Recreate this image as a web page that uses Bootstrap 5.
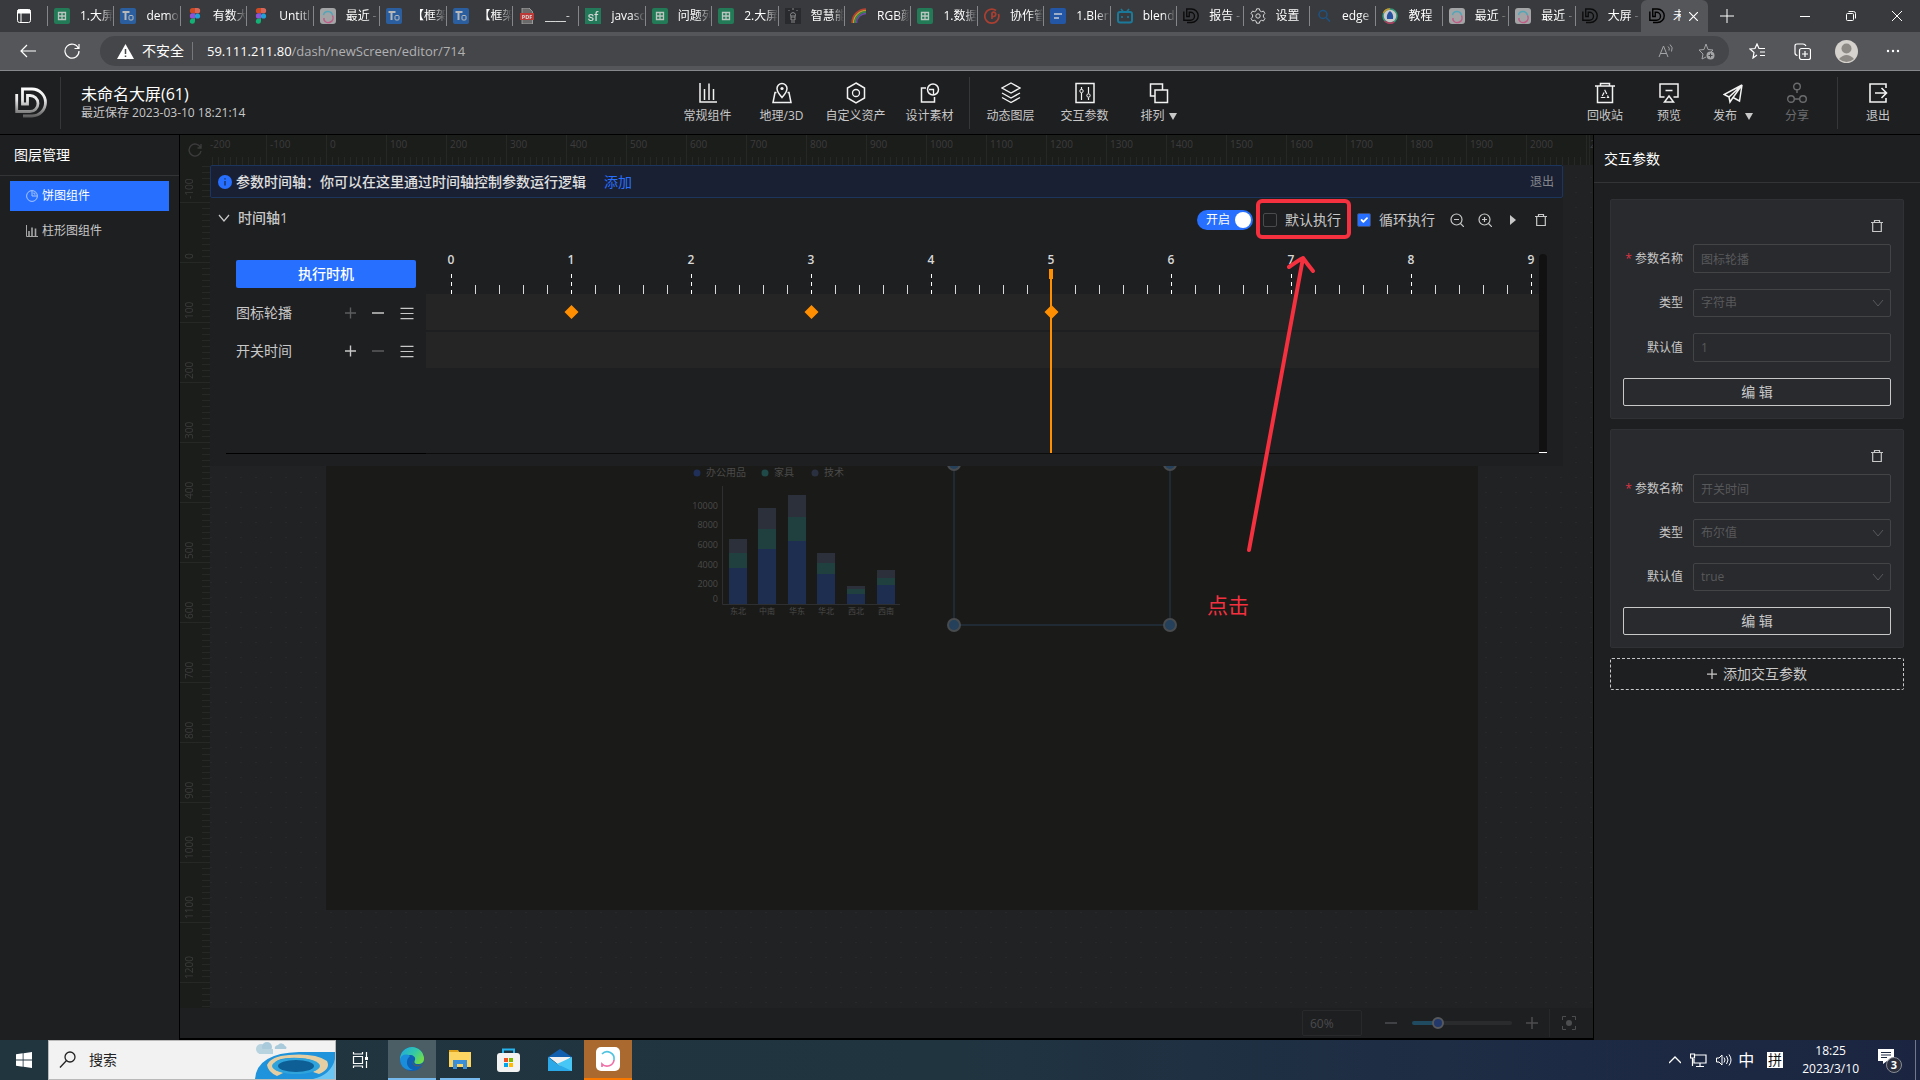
<!DOCTYPE html>
<html lang="zh-CN" data-bs-theme="dark">
<head>
<meta charset="utf-8">
<meta name="viewport" content="width=device-width, initial-scale=1">
<title>未命名大屏(61)</title>
<link href="https://cdn.jsdelivr.net/npm/bootstrap@5.3.0/dist/css/bootstrap.min.css" rel="stylesheet">
<style>
:root{--panel:#1e1f21;--blue:#2770ff;--txt:#c8c8c8;--ui:"Open Sans","Noto Sans CJK SC",sans-serif}
body{font-family:var(--ui);font-size:12px;line-height:18px;background:var(--panel);color:var(--txt);overflow:hidden}
button,input,select{font-family:inherit}
svg{display:block;flex:none}
.plain{background:none;border:0;padding:0;color:inherit;line-height:inherit}
.ln{fill:none;stroke:currentColor}
/* browser chrome */
.tabstrip{height:32px;background:#393a3d;color:#fff}
.tabmenu{width:47px;flex:none}
.tabs{min-width:0}
.btab{flex:1 1 0;min-width:0;border-left:1px solid #85868a;height:20px;padding-left:6px;gap:10px;color:#fff;text-decoration:none}
.btab span{flex:1;min-width:0;overflow:hidden;white-space:nowrap;-webkit-mask-image:linear-gradient(90deg,#000 60%,transparent)}
.btab svg{opacity:.8}
.tab-now{width:67px;flex:none;background:#55565a;border-radius:6px 6px 0 0;padding:0 8px;gap:8px}
.tab-now span{width:8px;overflow:hidden}
.strip-end{width:212px;flex:none}
.winbtn{width:46px;height:32px}
.addr{height:39px;background:#55565a;border-bottom:1px solid #86878b;color:#fff}
.reload{margin:0 20px 0 24px}
.pill{height:30px;border-radius:15px;background:#454649;padding:0 14px 0 17px}
.pill b{font-weight:400;color:#fff}
.pill .unsafe{font-size:14px}
.pill .url{font-size:13px;color:#b0b1b3}
.vr1{width:1px;background:#77787b;height:18px;margin:0 14px 0 8px}
/* application header */
.apphead{height:64px;border-bottom:1px solid #000;background:var(--panel)}
.brandbox{min-width:293px}
.logo{margin:0 13px 0 15px}
.sep{width:1px;height:52px;background:#36373a}
.midsep{margin:0 4px 0 2px}
.ttl{font-size:16px;line-height:20px;color:#fff}
.tool{width:74px;gap:3px;padding-top:2px;color:var(--txt)}
.tool.narrow{width:64px}
.tool svg{color:#f2f2f2}
.tool span svg{color:var(--txt)}
.tool.off,.tool.off svg{color:#6b6c6e}
.headright{padding-right:10px}
/* left list */
.layers{width:180px;border-right:1px solid #000}
.layers h2{font-size:14px;line-height:40px;padding:0 14px;border-bottom:1px solid #333436;color:#fff;font-weight:400}
.layerlist{padding:5px 10px;gap:5px}
.layer{height:30px;padding-left:16px;gap:4px;color:var(--txt);text-decoration:none}
.layer.sel{background:var(--blue);color:#fff}
/* canvas */
.mid{min-width:0}
.rul{background-color:#1b1d1b;color:#3b3c3b;font-size:10px;overflow:hidden}
.corner{width:30px;height:30px;background:#1b1d1b;color:#3b3c3b}
.rul-x{height:30px;background-image:repeating-linear-gradient(90deg,#262826 0 1px,transparent 1px 60px),repeating-linear-gradient(90deg,#262826 0 1px,transparent 1px 6px);background-size:auto,100% 8px;background-position:-4px 0,-4px 100%;background-repeat:repeat-x}
.rul-x span{width:60px;flex:none;line-height:18px}
.rul-y{width:30px;background-image:repeating-linear-gradient(180deg,#262826 0 1px,transparent 1px 60px),repeating-linear-gradient(180deg,#262826 0 1px,transparent 1px 6px);background-size:100% 1200px,8px 1200px;background-position:0 -23px,100% -23px;background-repeat:no-repeat}
.rul-y span{height:60px;flex:none;writing-mode:vertical-rl;transform:rotate(180deg);line-height:18px;padding-top:4px;width:20px}
.rul-y span:first-child{height:38px}
.stagebox{background:#202224;overflow:hidden}
.stagebox text{font-family:var(--ui);fill:#4a4b4a}
.zoombar{height:32px;border-bottom:2px solid #000;color:#4d4e50;padding-right:13px}
.zoombox{width:60px;height:26px;background:transparent;border:1px solid #28292b;border-radius:2px;color:#4a4b4d;font-size:12px;padding:0 7px;margin-right:22px}
.zrange{appearance:none;width:100px;height:4px;border-radius:2px;background:linear-gradient(90deg,#1f4a60 26%,#2a2b2d 26%);margin:0 14px}
.zrange::-webkit-slider-thumb{appearance:none;width:12px;height:12px;border-radius:50%;background:#22386a;border:2px solid #56585c}
.zsep{width:1px;height:28px;background:#27282a;margin:0 8px 0 11px}
/* timeline */
.timeline{left:0;right:30px;top:0;background:var(--panel);height:301px;z-index:2}
.tip{height:33px;background:#1a2034;border:1px solid #1c355c;border-radius:2px;padding:0 8px 0 7px;font-size:14px;color:#e0e0e0}
.tip a{color:#2770ff;margin-left:18px}
.tip button{font-size:12px;color:#85868a}
.tlhead{height:44px;font-size:14px;padding:0 15px 0 8px}
.tlname{gap:8px;padding-bottom:4px}
.sw{width:56px;height:20px;border-radius:10px;background:var(--blue);color:#fff;border:0;font-size:12px;padding:0 2px 0 9px;margin-right:10px}
.knob{width:16px;height:16px;border-radius:50%;background:#fff}
.tick.form-check-input{width:14px;height:14px;margin:0 8px 0 0;border:1px solid #4a4b4d;border-radius:2px;background-color:transparent}
.tick.form-check-input:checked{background-color:var(--blue);border-color:#3a4a70}
.tlicons{gap:14px;margin-left:15px}
.tlnames{width:190px;margin-left:26px;padding-top:6px}
.runbtn{width:180px;height:28px;border-radius:2px;background:var(--blue);color:#fff;border:0;font-size:14px;font-weight:500;margin-bottom:6px}
.tlrow{height:38px;font-size:14px;padding-right:12px}
.dim{color:#5c5d5f}
.tlbody{height:212px}
.tlscroll{width:8px;height:199px;background:#111112;border-radius:4px 4px 0 0;border-bottom:1px solid #fff;margin-right:16px}
.tlbody text{font-family:var(--ui);font-size:12px;font-weight:600;fill:#d8d8d8;text-anchor:middle}
.tlline{left:16px;width:200px;top:288px;height:1px;background:#000}
.note{left:0;top:0;z-index:5;pointer-events:none}
/* parameters */
.params{width:327px;border-left:1px solid #000}
.params h2{font-size:14px;line-height:47px;padding-left:10px;border-bottom:1px solid #333436;color:#fff;font-weight:400}
.plist{padding:16px 16px 0;gap:10px}
.pcard{background:#292a2e;border:1px solid #303135;border-radius:2px;padding:0 12px 12px}
.pcard .trashrow{height:44px;padding:8px 7px 0 0}
.prow{margin-bottom:16px}
.prow label{width:60px;text-align:right;margin-right:10px;white-space:nowrap}
.fld{flex:1;min-width:0;height:29px;background-color:transparent;border:1px solid #434446;border-radius:2px;color:#58595b;font-size:12px;padding:0 7px;opacity:1;appearance:none}
.fld:disabled{color:#58595b;opacity:1}
select.fld{height:28px;background:url("data:image/svg+xml,%3Csvg xmlns='http://www.w3.org/2000/svg' width='12' height='8'%3E%3Cpath d='M1 1l5 6 5-6' fill='none' stroke='%2358595b'/%3E%3C/svg%3E") no-repeat right 6px center}
.editbtn{height:28px;width:100%;background:transparent;border:1px solid #c8c8c8;border-radius:2px;color:var(--txt);font-size:14px;line-height:20px}
.addbtn{height:32px;background:transparent;border:1px dashed #c8c8c8;border-radius:2px;color:var(--txt);font-size:14px;gap:6px}
/* taskbar */
.taskbar{height:40px;background:linear-gradient(90deg,#21353f 0,#203440 50%,#1e2c44 75%,#1b2541 100%);color:#fff}
.searchbox{width:288px;background:#f2f2f2;border:1px solid #b9b9b9;color:#222}
.searchbox input{border:0;background:none;font-size:14px;width:120px;padding:0;outline:0}
.searchbox input::placeholder{color:#222;opacity:1}
.tbtn{width:48px;height:40px}
.tbtn.live{background:#4b5e66;border-bottom:2px solid #76b9ed}
.tbtn.open{border-bottom:2px solid #76b9ed;width:40px;margin:0 4px}
.tbtn.hot{background:#a9692f;border-bottom:2px solid #f97800}
.tray{gap:5px}
.ime{font-size:16px;margin-right:8px}
.clock{margin:0 14px}
</style>
</head>
<body class="vh-100 d-flex flex-column">
<svg width="0" height="0" class="position-absolute" aria-hidden="true">
<defs>
<symbol id="sheet" viewBox="0 0 16 16"><rect width="16" height="16" rx="2" fill="#1d8a5d"/><path d="M4.500 4.500h7v7h-7zM8 4.500v7M4.500 8h7" fill="none" stroke="#dce9e2" stroke-width="1.300"/></symbol>
<symbol id="tower" viewBox="0 0 16 16"><rect width="16" height="16" rx="2" fill="#2768b8"/><path d="M2.500 4h7M5.500 4v8" stroke="#d8d8d8" stroke-width="2" fill="none"/><rect x="9" y="7.500" width="4" height="4.500" rx="1" fill="none" stroke="#d8d8d8"/></symbol>
<symbol id="figma" viewBox="0 0 16 16"><path d="M8 0H5.500a2.600 2.600 0 0 0 0 5.300H8z" fill="#f24e1e"/><path d="M8 0h2.500a2.600 2.600 0 0 1 0 5.300H8z" fill="#ff7262"/><path d="M8 5.300H5.500a2.600 2.600 0 0 0 0 5.300H8z" fill="#a259ff"/><circle cx="10.500" cy="8" r="2.600" fill="#1abcfe"/><path d="M8 10.600H5.500A2.600 2.600 0 1 0 8 13.300z" fill="#0acf83"/></symbol>
<symbol id="loop" viewBox="0 0 16 16"><rect width="16" height="16" rx="3" fill="#bdbfc0"/><path d="M3.500 7A4.600 4.600 0 0 1 12.500 7.500" fill="none" stroke="#5cc0d8" stroke-width="1.500"/><path d="M12.500 7.500A4.500 4.500 0 0 1 4 12v-2" fill="none" stroke="#e0679a" stroke-width="1.500"/></symbol>
<symbol id="pdf" viewBox="0 0 16 16"><path d="M3 0h7l3.500 3.500V16H3z" fill="#777" stroke="#c8c8c8" stroke-width=".8"/><rect x="1" y="5" width="14" height="7" fill="#dc3a36"/><text x="8" y="10.800" font-size="5.500" font-weight="700" fill="#fff" text-anchor="middle" font-family="Open Sans, sans-serif">PDF</text></symbol>
<symbol id="sfi" viewBox="0 0 16 16"><rect width="16" height="16" fill="#1e8a62"/><text x="8" y="12.500" font-size="13" fill="#fff" text-anchor="middle" font-family="Roboto, sans-serif">sf</text></symbol>
<symbol id="bulb" viewBox="0 0 16 16"><rect width="16" height="16" fill="#26272a"/><path d="M6 12V9L5.500 6.500a2.600 2.600 0 0 1 5 0L10 9v3zM6 14h4M8 0v2M3.500 2l1 1M12.500 2l-1 1M7 7v3M9 7v3" fill="none" stroke="#bbb" stroke-width=".8"/></symbol>
<symbol id="rainbow" viewBox="0 0 16 16"><g fill="none" stroke-width="1.500"><path d="M1 15A14 14 0 0 1 15 1" stroke="#d8402f"/><path d="M2.500 15A12.500 12.500 0 0 1 15 2.500" stroke="#e8b32c"/><path d="M4 15A11 11 0 0 1 15 4" stroke="#35a24f"/><path d="M5.500 15A9.500 9.500 0 0 1 15 5.500" stroke="#7a4bc0"/></g></symbol>
<symbol id="redc" viewBox="0 0 16 16"><path d="M12 2.500A7 7 0 1 0 14.500 6M8 11V5c2-2 5 0 3 3l-3 1" fill="none" stroke="#c7402f" stroke-width="1.700"/></symbol>
<symbol id="bluedoc" viewBox="0 0 16 16"><rect width="16" height="16" rx="2" fill="#1e5fc0"/><path d="M4 6h8M4 10h5" stroke="#e8eefa" stroke-width="1.600"/></symbol>
<symbol id="bili" viewBox="0 0 16 16"><rect x="1" y="4" width="14" height="10.500" rx="2" fill="none" stroke="#1489b0" stroke-width="2"/><path d="M4 1l2.500 3M12 1L9.500 4M5 8v2M11 8v2" stroke="#1489b0" stroke-width="1.600"/></symbol>
<symbol id="dd" viewBox="0 0 32 32"><path d="M1.700 7v17.500H15a7.800 7.800 0 0 0 0-16h-2.500V17M7.500 18V2h9.500a13 13 0 0 1 0 27H8M6.200 17h7.700" fill="none" stroke="currentColor" stroke-width="2.800"/></symbol>
<symbol id="gear" viewBox="0 0 16 16"><circle cx="8" cy="8" r="2.200" class="ln"/><path class="ln" stroke-linejoin="round" d="M6.600.8h2.800l.5 2 1.600.9 2-.6 1.400 2.400-1.500 1.500v2l1.500 1.500-1.400 2.400-2-.6-1.600.9-.5 2H6.600l-.5-2-1.600-.9-2 .6-1.400-2.400L2.600 9V7L1.100 5.500l1.400-2.400 2 .6 1.600-.9z"/></symbol>
<symbol id="bing" viewBox="0 0 16 16"><circle cx="7" cy="6.500" r="4" fill="none" stroke="#175a94" stroke-width="1.500"/><path d="M10 9.500l4 4" stroke="#175a94" stroke-width="1.500"/></symbol>
<symbol id="drop" viewBox="0 0 16 16"><circle cx="8" cy="8" r="7" fill="#eee" stroke="#35b08a" stroke-width="1.500"/><path d="M1.500 5A7 7 0 0 1 8 1" fill="none" stroke="#e7b22d" stroke-width="1.600"/><path d="M3 13a7 7 0 0 0 9 1" fill="none" stroke="#d33b66" stroke-width="1.800"/><path d="M8 3c3 2 3.500 5 3 8H5c-.5-3 0-6 3-8z" fill="#2257b8"/></symbol>
<symbol id="bin" viewBox="0 0 14 14"><path class="ln" stroke-width="1.200" d="M1 3.500h12M4.500 3.500v-2h5v2M2.700 3.500v9h8.600v-9"/></symbol>
<symbol id="plus" viewBox="0 0 12 12"><path class="ln" stroke-width="1.500" d="M6 0v12M0 6h12"/></symbol>
<symbol id="minus" viewBox="0 0 12 12"><path class="ln" stroke-width="1.500" d="M0 6h12"/></symbol>
<symbol id="bars" viewBox="0 0 14 14"><path class="ln" stroke-width="1.200" d="M0 1.500h14M0 7h14M0 12.500h14"/></symbol>
<symbol id="tri" viewBox="0 0 8 7"><path d="M0 0h8L4 7z" fill="currentColor"/></symbol>
</defs>
</svg>

<div class="tabstrip d-flex align-items-center">
<button class="plain tabmenu d-flex justify-content-center" aria-label="标签页菜单"><svg width="14" height="14" viewBox="0 0 14 14"><rect class="ln" x=".5" y=".5" width="13" height="13" rx="2"/><path d="M1 1h12v3H1zM4 4v9" stroke="#fff" fill="#fff"/></svg></button>
<nav class="tabs d-flex align-items-center flex-fill">
<a href="#" class="btab d-flex align-items-center"><svg width="16" height="16"><use href="#sheet"/></svg><span>1.大屏</span></a>
<a href="#" class="btab d-flex align-items-center"><svg width="16" height="16"><use href="#tower"/></svg><span>demo</span></a>
<a href="#" class="btab d-flex align-items-center"><svg width="16" height="16"><use href="#figma"/></svg><span>有数大</span></a>
<a href="#" class="btab d-flex align-items-center"><svg width="16" height="16"><use href="#figma"/></svg><span>Untitl</span></a>
<a href="#" class="btab d-flex align-items-center"><svg width="16" height="16"><use href="#loop"/></svg><span>最近 -</span></a>
<a href="#" class="btab d-flex align-items-center"><svg width="16" height="16"><use href="#tower"/></svg><span>【框架</span></a>
<a href="#" class="btab d-flex align-items-center"><svg width="16" height="16"><use href="#tower"/></svg><span>【框架</span></a>
<a href="#" class="btab d-flex align-items-center"><svg width="16" height="16"><use href="#pdf"/></svg><span>____-</span></a>
<a href="#" class="btab d-flex align-items-center"><svg width="16" height="16"><use href="#sfi"/></svg><span>javasc</span></a>
<a href="#" class="btab d-flex align-items-center"><svg width="16" height="16"><use href="#sheet"/></svg><span>问题列</span></a>
<a href="#" class="btab d-flex align-items-center"><svg width="16" height="16"><use href="#sheet"/></svg><span>2.大屏</span></a>
<a href="#" class="btab d-flex align-items-center"><svg width="16" height="16"><use href="#bulb"/></svg><span>智慧能</span></a>
<a href="#" class="btab d-flex align-items-center"><svg width="16" height="16"><use href="#rainbow"/></svg><span>RGB颜</span></a>
<a href="#" class="btab d-flex align-items-center"><svg width="16" height="16"><use href="#sheet"/></svg><span>1.数据</span></a>
<a href="#" class="btab d-flex align-items-center"><svg width="16" height="16"><use href="#redc"/></svg><span>协作管</span></a>
<a href="#" class="btab d-flex align-items-center"><svg width="16" height="16"><use href="#bluedoc"/></svg><span>1.Blen</span></a>
<a href="#" class="btab d-flex align-items-center"><svg width="16" height="16"><use href="#bili"/></svg><span>blend</span></a>
<a href="#" class="btab d-flex align-items-center"><svg width="16" height="16" class="text-black"><use href="#dd"/></svg><span>报告 -</span></a>
<a href="#" class="btab d-flex align-items-center"><svg width="16" height="16"><use href="#gear"/></svg><span>设置</span></a>
<a href="#" class="btab d-flex align-items-center"><svg width="16" height="16"><use href="#bing"/></svg><span>edge</span></a>
<a href="#" class="btab d-flex align-items-center"><svg width="16" height="16"><use href="#drop"/></svg><span>教程</span></a>
<a href="#" class="btab d-flex align-items-center"><svg width="16" height="16"><use href="#loop"/></svg><span>最近 -</span></a>
<a href="#" class="btab d-flex align-items-center"><svg width="16" height="16"><use href="#loop"/></svg><span>最近 -</span></a>
<a href="#" class="btab d-flex align-items-center"><svg width="16" height="16" class="text-black"><use href="#dd"/></svg><span>大屏 -</span></a>
</nav>
<div class="tab-now d-flex align-items-center h-100"><svg width="16" height="16" class="text-black"><use href="#dd"/></svg><span>未</span><button class="plain" aria-label="关闭标签页"><svg width="9" height="9" viewBox="0 0 9 9"><path class="ln" stroke-width="1.200" d="M0 0l9 9M9 0L0 9"/></svg></button></div>
<div class="strip-end d-flex align-items-center">
<button class="plain px-2 ms-1 me-auto" aria-label="新建标签页"><svg width="14" height="14" viewBox="0 0 14 14"><path class="ln" d="M7 0v14M0 7h14"/></svg></button>
<button class="plain winbtn d-flex align-items-center justify-content-center" aria-label="最小化"><svg width="10" height="10" viewBox="0 0 10 10"><path class="ln" d="M0 5.500h10"/></svg></button>
<button class="plain winbtn d-flex align-items-center justify-content-center" aria-label="还原"><svg width="10" height="10" viewBox="0 0 10 10"><rect class="ln" x=".5" y="2.500" width="7" height="7" rx="1"/><path class="ln" d="M2.500.5h5a2 2 0 0 1 2 2v5"/></svg></button>
<button class="plain winbtn d-flex align-items-center justify-content-center" aria-label="关闭"><svg width="10" height="10" viewBox="0 0 10 10"><path class="ln" d="M0 0l10 10M10 0L0 10"/></svg></button>
</div>
</div>

<div class="addr d-flex align-items-center">
<button class="plain ms-3 px-1" aria-label="后退"><svg width="16" height="14" viewBox="0 0 16 14"><path class="ln" stroke-width="1.200" d="M16 7H1M7 1L1 7l6 6"/></svg></button>
<button class="plain reload" aria-label="刷新"><svg width="16" height="16" viewBox="0 0 16 16"><path class="ln" stroke-width="1.200" d="M14.500 5.500A7 7 0 1 0 15 8M15 1v4.500h-4.500"/></svg></button>
<div class="pill d-flex align-items-center flex-fill">
<svg width="17" height="15" viewBox="0 0 17 15"><path d="M8.500 0L17 15H0z" fill="#fff"/><path d="M8.500 5v5M8.500 11.500v1.500" stroke="#454649" stroke-width="1.500"/></svg>
<span class="ms-2 unsafe">不安全</span><span class="vr1"></span>
<span class="url"><b>59.111.211.80</b>/dash/newScreen/editor/714</span>
<svg class="ms-auto" width="16" height="16" viewBox="0 0 16 16" color="#a3a4a6"><path class="ln" d="M1 14L5.500 3 10 14M2.500 10.500h6M10 3.500q2 1.500 1 4M12 1.500q3.500 3 1.500 7"/></svg>
<svg class="ms-4" width="17" height="17" viewBox="0 0 17 17" color="#a3a4a6"><path class="ln" d="M8 14l-4 2 1-5-4-4 5-.5L8 1l2 5.500 5 .5-2 2"/><circle cx="12.500" cy="12.500" r="4" fill="#a3a4a6"/><path d="M12.500 10.500v4M10.500 12.500h4" stroke="#454649"/></svg>
</div>
<div class="d-flex align-items-center ps-3 ms-1 pe-3 me-1">
<svg class="me-4" width="17" height="16" viewBox="0 0 17 16"><path class="ln" stroke-width="1.200" d="M8 12l-4 3 1-5.500-4-3.500 5-.5L8 1l2 4.500h6M11 9h5M11 12.500h5"/></svg>
<svg class="ms-1 me-4" width="17" height="17" viewBox="0 0 17 17"><rect class="ln" stroke-width="1.200" x="5.500" y="5.500" width="11" height="11" rx="2"/><path class="ln" stroke-width="1.200" d="M11 8v6M8 11h6M3.500 12.500Q1 12 1 10V3q0-2 2-2h6q2 0 3 2"/></svg>
<svg class="me-4" width="23" height="23" viewBox="0 0 23 23"><circle cx="11.500" cy="11.500" r="11.500" fill="#d5d2cd"/><circle cx="11.500" cy="8.500" r="5" fill="#8d8984"/><path d="M4 19q7.500-8 15 0-7.500 6-15 0" fill="#8d8984"/></svg>
<svg class="ms-1" width="14" height="4" viewBox="0 0 14 4" fill="#fff"><circle cx="2" cy="2" r="1.200"/><circle cx="7" cy="2" r="1.200"/><circle cx="12" cy="2" r="1.200"/></svg>
</div>
</div>

<header class="apphead d-flex align-items-center">
<div class="brandbox d-flex align-items-center">
<svg class="logo" width="32" height="32" viewBox="0 0 32 32"><defs><linearGradient id="lg" x2="0" y2="32" gradientUnits="userSpaceOnUse"><stop stop-color="#fff"/><stop offset=".4" stop-color="#e8e8e8"/><stop offset="1" stop-color="#4a4a4a"/></linearGradient></defs><path d="M1.700 7v17.500H15a7.800 7.800 0 0 0 0-16h-2.500V17M7.500 18V2h9.500a13 13 0 0 1 0 27H8M6.200 17h7.700" fill="none" stroke="url(#lg)" stroke-width="2.800"/></svg>
<span class="sep"></span>
<div class="ms-3 ps-1"><div class="ttl">未命名大屏(61)</div><div class="text-nowrap">最近保存 2023-03-10 18:21:14</div></div>
</div>
<nav class="d-flex align-items-center mx-auto">
<button class="plain tool d-flex flex-column align-items-center"><svg width="20" height="22" viewBox="0 0 20 22"><path class="ln" stroke-width="1.500" d="M2 1v19h17M6.500 18V7M11 18V1.500M15.500 18V7"/></svg>常规组件</button>
<button class="plain tool d-flex flex-column align-items-center"><svg width="20" height="22" viewBox="0 0 20 22"><path class="ln" stroke-width="1.500" d="M4.500 10.500H3L1 20.500h18l-2-10h-1.500M10 15.500C6 11 5 9 5 6.500a5 5 0 0 1 10 0c0 2.500-1 4.500-5 9z"/><circle cx="10" cy="6.500" r="1.600" fill="currentColor"/></svg>地理/3D</button>
<button class="plain tool d-flex flex-column align-items-center"><svg width="20" height="22" viewBox="0 0 20 22"><path class="ln" stroke-width="1.500" d="M10 1l8.500 5v10L10 21l-8.500-5V6z"/><circle class="ln" stroke-width="1.300" cx="10" cy="11" r="3.500"/></svg>自定义资产</button>
<button class="plain tool d-flex flex-column align-items-center"><svg width="20" height="22" viewBox="0 0 20 22"><path class="ln" stroke-width="1.500" d="M6 6H1.500v14h13v-5"/><circle class="ln" stroke-width="1.500" cx="13" cy="7.500" r="5.500"/><path class="ln" stroke-width="1.300" d="M9 7.500h4.500V13"/></svg>设计素材</button>
<span class="sep midsep"></span>
<button class="plain tool d-flex flex-column align-items-center"><svg width="20" height="22" viewBox="0 0 20 22"><path class="ln" stroke-width="1.400" d="M10 1l9 5-9 5-9-5zM1 11l9 5 9-5M1 15.500l9 5 9-5"/></svg>动态图层</button>
<button class="plain tool d-flex flex-column align-items-center"><svg width="20" height="22" viewBox="0 0 20 22"><path class="ln" stroke-width="1.500" d="M1 1.500h18v19H1z"/><path class="ln" stroke-width="1.200" d="M6.500 5v2.500M6.500 11v7M13.500 5v6.500M13.500 15.500V18"/><circle class="ln" cx="6.500" cy="9" r="1.700"/><circle class="ln" cx="13.500" cy="13.500" r="1.700"/></svg>交互参数</button>
<button class="plain tool d-flex flex-column align-items-center"><svg width="20" height="22" viewBox="0 0 20 22"><path class="ln" stroke-width="1.500" d="M6 8h12.500v12.500H6zM13.500 8V2H1.500v12H6"/></svg><span class="d-flex align-items-center gap-1">排列<svg width="8" height="7"><use href="#tri"/></svg></span></button>
</nav>
<nav class="headright d-flex align-items-center">
<button class="plain tool narrow d-flex flex-column align-items-center"><svg width="20" height="22" viewBox="0 0 20 22"><path class="ln" stroke-width="1.500" d="M0 4h20M5.500 4V1.500h9V4M2.500 4v16.500h15V4"/><path class="ln" stroke-width="1.200" stroke-dasharray="4 1.500" d="M10 8.500l3.500 7h-7z"/></svg>回收站</button>
<button class="plain tool narrow d-flex flex-column align-items-center"><svg width="20" height="22" viewBox="0 0 20 22"><path class="ln" stroke-width="1.500" d="M5.500 15H1V2h18v13h-4.500M6.500 8.500h7M10 14l4.500 6h-9z"/></svg>预览</button>
<button class="plain tool narrow d-flex flex-column align-items-center"><svg width="20" height="22" viewBox="0 0 20 22"><path class="ln" stroke-width="1.500" d="M19 3L1 12.500l5 2.500zM19 3l-2.500 16-6.500-3.500zM6 15l1 5 3-4.500"/></svg><span class="d-flex align-items-center gap-2">发布<svg width="8" height="7"><use href="#tri"/></svg></span></button>
<button class="plain tool off narrow d-flex flex-column align-items-center"><svg width="20" height="22" viewBox="0 0 20 22"><circle class="ln" stroke-width="1.400" cx="10" cy="4.500" r="3.300"/><circle class="ln" stroke-width="1.400" cx="4" cy="17" r="3.300"/><circle class="ln" stroke-width="1.400" cx="16" cy="17" r="3.300"/><path class="ln" stroke-width="1.400" d="M10 8v3M7.500 17h5"/></svg>分享</button>
<span class="sep mx-2"></span>
<button class="plain tool narrow d-flex flex-column align-items-center"><svg width="20" height="22" viewBox="0 0 20 22"><path class="ln" stroke-width="1.600" d="M18 6V2H2v18h16v-4M7 11h11M13.500 6l5 5-5 5"/></svg>退出</button>
</nav>
</header>

<main class="d-flex flex-fill position-relative" style="min-height:0">
<aside class="layers flex-shrink-0">
<h2 class="m-0">图层管理</h2>
<div class="layerlist d-flex flex-column">
<a href="#" class="layer sel d-flex align-items-center"><svg width="12" height="12" viewBox="0 0 12 12" opacity=".6"><circle class="ln" cx="6" cy="6" r="5.400"/><path class="ln" d="M6 1v5h5M8 2.500v1.500h1.500"/></svg>饼图组件</a>
<a href="#" class="layer d-flex align-items-center"><svg width="12" height="12" viewBox="0 0 12 12" opacity=".8"><path class="ln" stroke-width="1" d="M.5 0v11.500H12"/><path class="ln" stroke-width="1.600" d="M3 11V6M6 11V2.500M9.500 11V3.500"/></svg>柱形图组件</a>
</div>
</aside>

<section class="mid flex-fill d-flex flex-column">
<div class="d-flex"><button class="plain corner d-flex align-items-center justify-content-center flex-shrink-0" aria-label="复位"><svg width="14" height="14" viewBox="0 0 14 14"><path class="ln" stroke-width="1.400" d="M12.500 4.500A6 6 0 1 0 13 8M13 1v4H9.500"/></svg></button><div class="rul rul-x d-flex flex-fill" id="rulerX"></div></div>
<div class="d-flex flex-fill" style="min-height:0">
<div class="rul rul-y d-flex flex-column flex-shrink-0" id="rulerY"></div>
<div class="stagebox position-relative flex-fill">
<svg class="position-absolute" width="100%" height="100%">
<defs><pattern id="dots" x="15" y="12" width="15" height="15" patternUnits="userSpaceOnUse"><rect width="2" height="1" fill="#27292b"/></pattern></defs>
<rect width="100%" height="100%" fill="url(#dots)"/>
<rect x="116" y="97" width="1152" height="648" fill="#1a1a18"/>
<g font-size="10"><circle cx="487" cy="308" r="3.500" fill="#1f2f58"/><text x="496" y="311">办公用品</text><circle cx="555" cy="308" r="3.500" fill="#1f4a47"/><text x="564" y="311">家具</text><circle cx="605" cy="308" r="3.500" fill="#2b3040"/><text x="614" y="311">技术</text></g>
<path d="M512.500 321v118.500H690" fill="none" stroke="#2e2f30"/>
<g font-size="9" text-anchor="end"><text x="508" y="344">10000</text><text x="508" y="363">8000</text><text x="508" y="383">6000</text><text x="508" y="403">4000</text><text x="508" y="422">2000</text><text x="508" y="437">0</text></g>
<g fill="#2b303b"><path d="M519 374h18v14h-18zM548 343h18v21h-18zM578 330h18v22h-18zM607 388h18v10h-18zM637 421h18v3h-18zM667 405h18v8h-18z"/></g>
<g fill="#1f403e"><path d="M519 388h18v15h-18zM548 364h18v20h-18zM578 352h18v24h-18zM607 398h18v11h-18zM637 424h18v5h-18zM667 413h18v7h-18z"/></g>
<g fill="#1e2e50"><path d="M519 403h18v36h-18zM548 384h18v55h-18zM578 376h18v63h-18zM607 409h18v30h-18zM637 429h18v10h-18zM667 420h18v19h-18z"/></g>
<g font-size="8" text-anchor="middle"><text x="528" y="449">东北</text><text x="557" y="449">中南</text><text x="587" y="449">华东</text><text x="616" y="449">华北</text><text x="646" y="449">西北</text><text x="676" y="449">西南</text></g>
<g fill="none" stroke="#22303f" stroke-width="1.500"><path d="M744 299v161h216V299"/></g>
<g fill="#24405a" stroke="#484b4e" stroke-width="2"><circle cx="744" cy="299" r="6"/><circle cx="960" cy="299" r="6"/><circle cx="744" cy="460" r="6"/><circle cx="960" cy="460" r="6"/></g>
</svg>

<div class="timeline position-absolute d-flex flex-column">
<div class="tip d-flex align-items-center"><svg width="14" height="14" viewBox="0 0 14 14"><circle cx="7" cy="7" r="7" fill="#2770ff"/><path d="M7 6v4.500M7 3.200v1.300" stroke="#16305f" stroke-width="1.400"/></svg><span class="ms-1 fw-medium">参数时间轴：你可以在这里通过时间轴控制参数运行逻辑</span><a href="#" class="text-decoration-none">添加</a><button class="plain ms-auto">退出</button></div>
<div class="tlhead d-flex align-items-center"><div class="tlname d-flex align-items-center me-auto"><svg width="12" height="8" viewBox="0 0 12 8"><path class="ln" stroke-width="1.200" d="M1 1l5 6 5-6"/></svg><span class="fw-medium">时间轴1</span></div>
<button class="sw d-flex align-items-center justify-content-between" role="switch" aria-checked="true">开启<span class="knob"></span></button>
<input class="tick form-check-input" type="checkbox" id="autorun"><label for="autorun" class="me-3">默认执行</label>
<input class="tick form-check-input" type="checkbox" id="looprun" checked><label for="looprun">循环执行</label>
<div class="tlicons d-flex">
<button class="plain" aria-label="缩小"><svg width="14" height="14" viewBox="0 0 14 14"><circle class="ln" stroke-width="1.200" cx="6.500" cy="6.500" r="5.500"/><path class="ln" stroke-width="1.200" d="M4 6.500h5M10.500 10.500L14 14"/></svg></button>
<button class="plain" aria-label="放大"><svg width="14" height="14" viewBox="0 0 14 14"><circle class="ln" stroke-width="1.200" cx="6.500" cy="6.500" r="5.500"/><path class="ln" stroke-width="1.200" d="M4 6.500h5M6.500 4v5M10.500 10.500L14 14"/></svg></button>
<button class="plain" aria-label="播放"><svg width="14" height="14" viewBox="0 0 14 14"><path d="M4 2l6 5-6 5z" fill="currentColor"/></svg></button>
<button class="plain" aria-label="删除时间轴"><svg width="14" height="14"><use href="#bin"/></svg></button>
</div></div>
<div class="tlbody d-flex mt-2 pt-1">
<div class="tlnames flex-shrink-0">
<button class="runbtn d-block">执行时机</button>
<div class="tlrow d-flex align-items-center"><span class="me-auto">图标轮播</span><button class="plain dim" aria-label="添加"><svg width="11" height="12"><use href="#plus"/></svg></button><button class="plain mx-3" aria-label="移除"><svg width="12" height="12"><use href="#minus"/></svg></button><button class="plain" aria-label="菜单"><svg width="14" height="13"><use href="#bars"/></svg></button></div>
<div class="tlrow d-flex align-items-center"><span class="me-auto">开关时间</span><button class="plain" aria-label="添加"><svg width="11" height="12"><use href="#plus"/></svg></button><button class="plain dim mx-3" aria-label="移除"><svg width="12" height="12"><use href="#minus"/></svg></button><button class="plain" aria-label="菜单"><svg width="14" height="13"><use href="#bars"/></svg></button></div>
</div>
<svg class="flex-fill" width="100" height="200">
<defs>
<pattern id="minor" x="25" width="24" height="200" patternUnits="userSpaceOnUse"><rect width="1" height="200" fill="#d8d8d8"/></pattern>
<pattern id="major" x="25" width="120" height="8" patternUnits="userSpaceOnUse"><rect width="1" height="4" fill="#fff"/></pattern>
<pattern id="blank" x="25" width="120" height="200" patternUnits="userSpaceOnUse"><rect width="1" height="200" fill="#1e1f21"/></pattern>
</defs>
<rect x="25" y="31" width="100%" height="9" fill="url(#minor)"/><rect x="25" y="20" width="100%" height="20" fill="url(#blank)"/><g transform="translate(0 20)"><rect x="25" width="100%" height="20" fill="url(#major)"/></g>
<rect y="40" width="100%" height="36" fill="#252525"/><rect y="78" width="100%" height="36" fill="#252525"/>
<rect y="199" width="100%" height="1" fill="#0c0c0d"/>
<text x="25" y="10">0</text><text x="145" y="10">1</text><text x="265" y="10">2</text><text x="385" y="10">3</text><text x="505" y="10">4</text><text x="625" y="10">5</text><text x="745" y="10">6</text><text x="865" y="10">7</text><text x="985" y="10">8</text><text x="1105" y="10">9</text>
<g fill="#ff8f00"><path d="M145.500 51l7 7-7 7-7-7zM385.500 51l7 7-7 7-7-7zM625.500 51l7 7-7 7-7-7z"/><path d="M623 15h4v10h-1v174h-2V25h-1z"/></g>
</svg>
<div class="tlscroll flex-shrink-0"></div>
</div>
<div class="tlline position-absolute"></div>
</div>
</div>
</div>
<div class="zoombar d-flex align-items-center justify-content-end">
<label class="visually-hidden" for="zoomval">缩放</label><input id="zoomval" class="zoombox" value="60%">
<button class="plain" aria-label="缩小画布"><svg width="14" height="12" viewBox="0 0 14 12"><path class="ln" stroke-width="1.500" d="M1 6h12"/></svg></button>
<input type="range" class="zrange" min="0" max="100" value="23" aria-label="缩放比例">
<button class="plain" aria-label="放大画布"><svg width="12" height="12"><use href="#plus"/></svg></button>
<span class="zsep"></span>
<button class="plain px-1" aria-label="适应画布"><svg width="14" height="14" viewBox="0 0 14 14"><path class="ln" d="M.5 4V.5H4M10 .5h3.500V4M13.500 10v3.500H10M4 13.500H.5V10"/><circle cx="7" cy="7" r="3" fill="currentColor"/></svg></button>
</div>
</section>

<aside class="params flex-shrink-0">
<h2 class="m-0">交互参数</h2>
<div class="plist d-flex flex-column">
<form class="pcard">
<div class="trashrow d-flex align-items-center justify-content-end"><button type="button" class="plain" aria-label="删除参数"><svg width="14" height="14"><use href="#bin"/></svg></button></div>
<div class="prow d-flex align-items-center"><label for="n1"><span class="text-danger">*</span> 参数名称</label><input class="fld" id="n1" value="图标轮播" disabled></div>
<div class="prow d-flex align-items-center"><label for="t1">类型</label><select class="fld" id="t1" disabled><option>字符串</option></select></div>
<div class="prow d-flex align-items-center"><label for="v1">默认值</label><input class="fld" id="v1" value="1" disabled></div>
<button type="button" class="editbtn d-block">编 辑</button>
</form>
<form class="pcard">
<div class="trashrow d-flex align-items-center justify-content-end"><button type="button" class="plain" aria-label="删除参数"><svg width="14" height="14"><use href="#bin"/></svg></button></div>
<div class="prow d-flex align-items-center"><label for="n2"><span class="text-danger">*</span> 参数名称</label><input class="fld" id="n2" value="开关时间" disabled></div>
<div class="prow d-flex align-items-center"><label for="t2">类型</label><select class="fld" id="t2" disabled><option>布尔值</option></select></div>
<div class="prow d-flex align-items-center"><label for="v2">默认值</label><select class="fld" id="v2" disabled><option>true</option></select></div>
<button type="button" class="editbtn d-block">编 辑</button>
</form>
<button class="addbtn d-flex align-items-center justify-content-center"><svg width="10" height="12"><use href="#plus"/></svg>添加交互参数</button>
</div>
</aside>

<svg class="note position-absolute" width="1920" height="600" viewBox="0 0 1920 600" fill="none" stroke="#f5303f">
<rect x="1258" y="66" width="91" height="36" rx="4" stroke-width="4"/>
<path d="M1249 415L1303 123M1289 132q10-7 14-9 5 7 10 13" stroke-width="4" stroke-linecap="round" stroke-linejoin="round"/>
<text x="1207" y="478" font-size="21" font-weight="400" font-family="Noto Sans CJK SC, sans-serif" fill="#f5303f" stroke="none">点击</text>
</svg>
</main>

<footer class="taskbar d-flex align-items-stretch flex-shrink-0">
<button class="plain tbtn d-flex align-items-center justify-content-center" aria-label="开始"><svg width="16" height="16" viewBox="0 0 16 16" fill="#fff"><path d="M0 2.200L6.700 1.300v6.300H0zM7.500 1.200L16 0v7.600H7.500zM0 8.400h6.700v6.300L0 13.800zM7.500 8.400H16V16l-8.500-1.200z"/></svg></button>
<div class="searchbox d-flex align-items-center"><svg class="ms-2 me-1" width="20" height="20" viewBox="0 0 20 20"><circle cx="13" cy="7" r="5" fill="none" stroke="#222" stroke-width="1.300"/><path d="M9.500 10.500L3 17.500" stroke="#222" stroke-width="1.300"/></svg><input class="ms-2" type="text" placeholder="搜索" aria-label="搜索">
<svg class="ms-auto align-self-end" width="80" height="38" viewBox="0 0 80 38"><path d="M0 38Q2 12 44 11H80v27z" fill="#1f93dc"/><path d="M58 38q18-4 22-20v20z" fill="#6cc6f4"/><path d="M12 24q4-9 22-10 26-2 38 6 4 8-8 13l-6-2q8-6 2-10-10-5-26-4-14 1-14 6l8 9-6 3q-9-4-10-11z" fill="#e5cfa2"/><ellipse cx="41" cy="25" rx="24" ry="8" fill="#2fa3dc"/><ellipse cx="41" cy="25" rx="18" ry="6" fill="#0d5f96"/><circle cx="6" cy="8" r="5" fill="#b7d3e0"/><circle cx="12" cy="6" r="5" fill="#a9cadb"/><path d="M2 8h16v5H4z" fill="#b7d3e0"/><path d="M20 8a4 3 0 0 1 3-4 4 4 0 0 1 7 1 2 2 0 0 1 1 3z" fill="#a9cadb"/></svg></div>
<button class="plain tbtn d-flex align-items-center justify-content-center" aria-label="任务视图"><svg width="17" height="16" viewBox="0 0 17 16"><path class="ln" stroke-width="1.200" d="M1.500 4.500h9v7h-9zM1.500 0v2h9V0M1.500 16v-2h9v2M14.500 0v5M14.500 9v7"/><rect x="13" y="5" width="3" height="3" fill="#fff"/></svg></button>
<button class="plain tbtn live d-flex align-items-center justify-content-center ms-1" aria-label="Edge"><svg width="24" height="24" viewBox="0 0 24 24"><defs><linearGradient id="eg" x1="0" y1="0" x2="1" y2=".6"><stop stop-color="#1ca6e8"/><stop offset=".6" stop-color="#35c9a5"/><stop offset="1" stop-color="#6fdc4c"/></linearGradient></defs><circle cx="12" cy="12" r="12" fill="#0e60b4"/><path d="M0 12A12 12 0 0 1 24 12c0 4-3 5-6 5-4 0-4-2-3-4 1-3-2-5-5-5-5 0-9 2-10 6z" fill="url(#eg)"/><path d="M10 9c-5 4-4 12 3 14-9 1-13-5-13-11 1-4 6-6 10-3z" fill="#1b8edb"/><path d="M14 13c-2 2-1 5 4 5 2 0 4-1 5-2q.5.500 0 1.500c-2 2-7 3-9 1-2-1.500-2-4.500 0-5.500z" fill="#4b5e66"/></svg></button>
<button class="plain tbtn open d-flex align-items-center justify-content-center" aria-label="资源管理器"><svg width="22" height="20" viewBox="0 0 22 20"><path d="M0 1h9l2 3H0z" fill="#e0a21a"/><rect y="3" width="22" height="15" fill="#fcd462"/><path d="M4 20v-9h14v9h-4v-5H8v5z" fill="#3b8fd8"/></svg></button>
<button class="plain tbtn d-flex align-items-center justify-content-center" aria-label="应用商店"><svg width="23" height="24" viewBox="0 0 23 24"><path d="M6 6V1.500h11V6" fill="none" stroke="#26b4ef" stroke-width="2"/><rect y="5" width="23" height="19" rx="3" fill="#f2f2f2"/><path d="M7 10h4v4H7z" fill="#f25022"/><path d="M12 10h4v4h-4z" fill="#7fba00"/><path d="M7 15h4v4H7z" fill="#00a4ef"/><path d="M12 15h4v4h-4z" fill="#ffb900"/></svg></button>
<button class="plain tbtn d-flex align-items-center justify-content-center ms-1" aria-label="邮件"><svg width="24" height="22" viewBox="0 0 24 22"><path d="M0 8l12-8 12 8v3H0z" fill="#0f5fae"/><path d="M1 8h22L12 17z" fill="#f0f0f0"/><path d="M0 8l12 9 12-9v14H0z" fill="#2aa8e8"/><path d="M24 8v14L9 15z" fill="#46c7f5"/></svg></button>
<button class="plain tbtn hot d-flex align-items-center justify-content-center" aria-label="云笔记"><svg width="24" height="24" viewBox="0 0 24 24"><rect width="24" height="24" rx="5" fill="#fff"/><path d="M6 7a7 7 0 0 1 12 6" fill="none" stroke="#4fc3df" stroke-width="1.700"/><path d="M18 13A7 7 0 0 1 6 17v3" fill="none" stroke="#ef6fa7" stroke-width="1.700"/></svg></button>
<div class="tray d-flex align-items-center ms-auto">
<svg class="me-1" width="12" height="8" viewBox="0 0 12 8"><path class="ln" stroke-width="1.300" d="M0 7l6-6 6 6"/></svg>
<svg class="me-1" width="17" height="15" viewBox="0 0 17 15"><path class="ln" stroke-width="1.200" d="M5 2h11v8H4V6M10 10v3.500M6 13.500h8M.5 1h4v4h-4zM2.500 5v8"/></svg>
<svg width="17" height="14" viewBox="0 0 17 14"><path class="ln" d="M.5 5v4H3l3 3V2L3 5zM8 4.500q2 2.500 0 5M10.500 3q3 4 0 8M13 1.500q4 5.500 0 11"/></svg>
<span class="ime">中</span>
<svg width="16" height="16" viewBox="0 0 16 16"><rect width="16" height="16" fill="#fff"/><text x="8" y="13" font-size="14" fill="#111" text-anchor="middle" font-family="Noto Sans CJK SC, sans-serif">拼</text></svg>
<div class="clock text-center">18:25<br>2023/3/10</div>
<svg class="me-1" width="24" height="26" viewBox="0 0 24 26"><path d="M0 2h16v12H9l-4 3v-3H0z" fill="#fff"/><path d="M3 5.500h10M3 8h10M3 10.500h6" stroke="#1d2843"/><circle cx="16" cy="18" r="7.500" fill="#2b2f3d" stroke="#8a8d96"/><text x="16" y="22" font-size="11" font-weight="700" fill="#fff" text-anchor="middle" font-family="Open Sans, sans-serif">3</text></svg>
<span style="width:1px;height:40px;background:#70788a" class="me-1 ms-1"></span>
</div>
</footer>

<script src="https://cdn.jsdelivr.net/npm/bootstrap@5.3.0/dist/js/bootstrap.bundle.min.js"></script>
<script>
/* ruler labels, one for each hundred units */
function labels(id, from, to) {
  const box = document.getElementById(id);
  for (let v = from; v <= to; v += 100) {
    const s = document.createElement('span');
    s.textContent = v;
    box.append(s);
  }
}
labels('rulerX', -200, 2100);
labels('rulerY', -100, 1200);
</script>
</body>
</html>
